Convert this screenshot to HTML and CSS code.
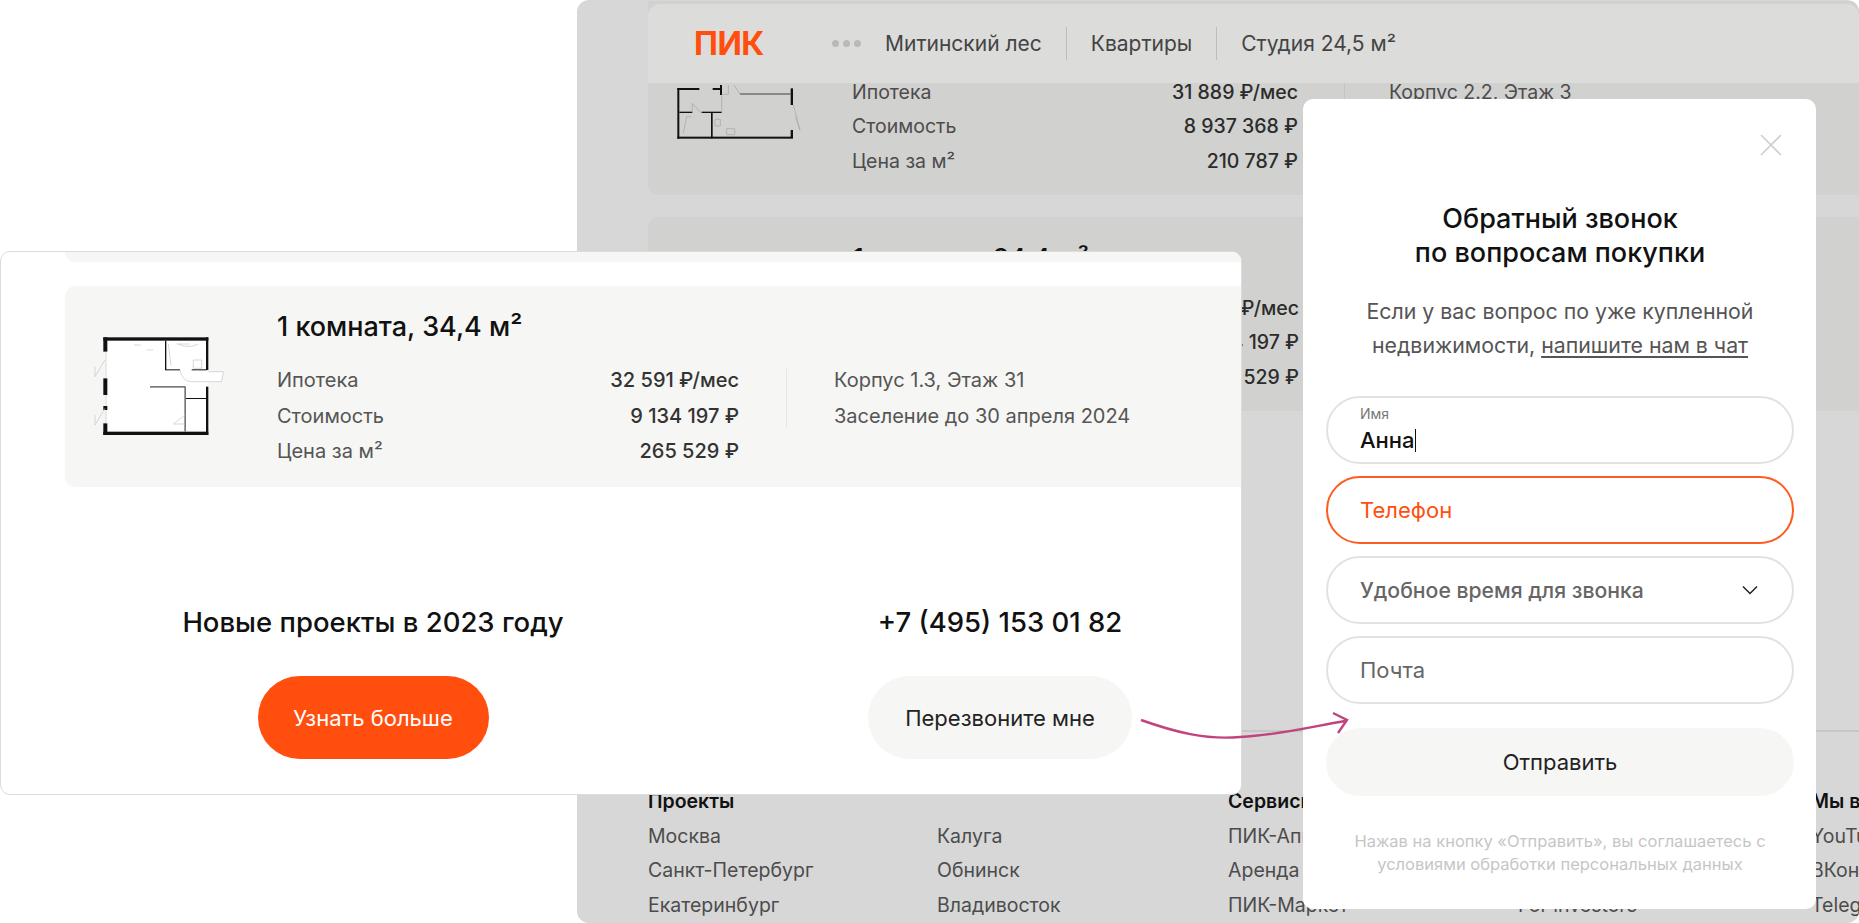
FILE: index.html
```html
<!DOCTYPE html>
<html lang="ru">
<head>
<meta charset="utf-8">
<title>ПИК</title>
<link rel="stylesheet" href="styles.css">
</head>
<body>
<div class="stage">

  <!-- page behind, dimmed -->
  <div class="win-back">
    <div class="site-head">
      <span class="logo">ПИК</span>
      <span class="dots"><i></i><i></i><i></i></span>
      <span class="crumb">Митинский лес</span>
      <span class="crumb-sep"></span>
      <span class="crumb">Квартиры</span>
      <span class="crumb-sep"></span>
      <span class="crumb">Студия 24,5 м²</span>
    </div>

    <div class="flat flat-dim flat-first">
      <svg class="plan-dim" viewBox="0 0 480 270">
        <g fill="#111">
          <rect x="52" y="54" width="66" height="6"/>
          <rect x="52" y="54" width="6" height="152"/>
          <rect x="52" y="200" width="347" height="6"/>
          <rect x="158" y="54" width="27" height="6"/>
          <rect x="180" y="45" width="6" height="30"/>
          <rect x="392" y="55" width="7" height="50"/>
          <rect x="392" y="180" width="7" height="24"/>
          <rect x="153" y="127" width="5" height="78"/>
          <rect x="58" y="125" width="39" height="4"/>
          <rect x="125" y="125" width="60" height="4"/>
        </g>
        <rect x="240" y="70" width="152" height="4" fill="#666"/>
        <path d="M185 75v50M205 45v28h-20M222 45l18 28M97 125v-25l25 28M400 105l20 75-14-40M70 190l10-50h14M165 148h16v20h-16zM200 176h24v18h-24z" fill="none" stroke="#a5a5a5" stroke-width="2"/>
      </svg>
      <div class="flat-info">
        <div class="flat-title"></div>
        <div class="flat-cols">
          <div class="specs">
            <div class="spec"><span>Ипотека</span><b>31 889 ₽/мес</b></div>
            <div class="spec"><span>Стоимость</span><b>8 937 368 ₽</b></div>
            <div class="spec"><span>Цена за м²</span><b>210 787 ₽</b></div>
          </div>
          <div class="flat-rule"></div>
          <div class="meta">
            <div>Корпус 2.2, Этаж 3</div>
          </div>
        </div>
      </div>
    </div>

    <div class="flat flat-dim">
      <div class="flat-info flat-info-solo">
        <div class="flat-title">1 комната, 34,4 м²</div>
        <div class="flat-cols">
          <div class="specs">
            <div class="spec"><b>32 591 ₽/мес</b></div>
            <div class="spec"><b>9 134 197 ₽</b></div>
            <div class="spec"><b>265 529 ₽</b></div>
          </div>
        </div>
      </div>
    </div>

    <div class="foot-rule"></div>

    <div class="foot">
      <div class="foot-col">
        <div class="foot-head">Проекты</div>
        <div>Москва</div>
        <div>Санкт-Петербург</div>
        <div>Екатеринбург</div>
      </div>
      <div class="foot-col">
        <div>Калуга</div>
        <div>Обнинск</div>
        <div>Владивосток</div>
      </div>
      <div class="foot-col">
        <div class="foot-head">Сервисы</div>
        <div>ПИК-Аппарт</div>
        <div>Аренда</div>
        <div>ПИК-Маркет</div>
      </div>
      <div class="foot-col">
        <div>For investors</div>
      </div>
      <div class="foot-col">
        <div class="foot-head">Мы в сети</div>
        <div>YouTube</div>
        <div>ВКонтакте</div>
        <div>Telegram</div>
      </div>
    </div>
  </div>

  <!-- enlarged fragment -->
  <div class="win-front">
    <div class="prev-card"></div>
    <div class="flat">
      <svg class="plan" viewBox="0 0 480 390">
        <rect x="76" y="58" width="306" height="282" fill="#fff"/>
        <path d="M385 155h45l-5 30h-95l-25-35h80z" fill="#fff"/>
        <g fill="#111">
          <rect x="70" y="52" width="315" height="10"/>
          <rect x="70" y="335" width="315" height="10"/>
          <rect x="70" y="52" width="12" height="43"/>
          <rect x="70" y="175" width="12" height="50"/>
          <rect x="70" y="258" width="12" height="12"/>
          <rect x="70" y="310" width="12" height="35"/>
          <rect x="378" y="52" width="7" height="98"/>
          <rect x="378" y="200" width="7" height="145"/>
          <rect x="255" y="62" width="4" height="88"/>
          <rect x="255" y="148" width="45" height="3"/>
          <rect x="335" y="148" width="45" height="3"/>
          <rect x="318" y="234" width="62" height="3"/>
        </g>
        <g fill="#777">
          <rect x="210" y="198" width="106" height="5"/>
          <rect x="313" y="200" width="5" height="135"/>
        </g>
        <path d="M78 95v80M78 225v33M78 270v40M45 170l30-50M45 315l30-50M45 170v-30M45 315v-30M330 185h95l5-30h-45M300 150q5 30 30 35M280 312l35-27M280 312h35M265 72l8 65M162 75h20M200 90h20M290 72h40M340 120h25v25h-25zM295 72q30 15 60 0" fill="none" stroke="#c4c4c4" stroke-width="2"/>
      </svg>
      <div class="flat-info">
        <div class="flat-title">1 комната, 34,4 м²</div>
        <div class="flat-cols">
          <div class="specs">
            <div class="spec"><span>Ипотека</span><b>32 591 ₽/мес</b></div>
            <div class="spec"><span>Стоимость</span><b>9 134 197 ₽</b></div>
            <div class="spec"><span>Цена за м²</span><b>265 529 ₽</b></div>
          </div>
          <div class="flat-rule"></div>
          <div class="meta">
            <div>Корпус 1.3, Этаж 31</div>
            <div>Заселение до 30 апреля 2024</div>
          </div>
        </div>
      </div>
    </div>

    <div class="cta-row">
      <div class="cta">
        <div class="cta-title">Новые проекты в 2023 году</div>
        <div class="btn btn-orange">Узнать больше</div>
      </div>
      <div class="cta">
        <div class="cta-title">+7 (495) 153 01 82</div>
        <div class="btn btn-grey">Перезвоните мне</div>
      </div>
    </div>
  </div>

  <!-- callback modal -->
  <div class="modal">
    <svg class="close" viewBox="0 0 22 22"><path d="M1 1l20 20M21 1L1 21" fill="none" stroke="#cfcfcf" stroke-width="1.6"/></svg>
    <h2 class="modal-title">Обратный звонок<br>по вопросам покупки</h2>
    <p class="modal-text">Если у вас вопрос по уже купленной<br>недвижимости, <a href="#">напишите нам в чат</a></p>
    <div class="fields">
      <div class="field field-filled">
        <span class="field-label">Имя</span>
        <span class="field-value">Анна<i class="caret"></i></span>
      </div>
      <div class="field field-error">Телефон</div>
      <div class="field field-select">
        Удобное время для звонка
        <svg class="chev" viewBox="0 0 16 10"><path d="M1 1.5l7 7 7-7" fill="none" stroke="#222" stroke-width="1.5"/></svg>
      </div>
      <div class="field">Почта</div>
    </div>
    <div class="btn btn-grey btn-send">Отправить</div>
    <p class="modal-note">Нажав на кнопку «Отправить», вы соглашаетесь с<br>условиями обработки персональных данных</p>
  </div>

  <svg class="arrow" viewBox="0 0 1859 923">
    <path d="M1141 720C1175 732 1205 740 1240 737C1280 735 1310 727 1345 721M1333 713L1347 720L1338 733" fill="none" stroke="#c0447f" stroke-width="2.4"/>
  </svg>
</div>
</body>
</html>
```

FILE: styles.css
```css
* {
    box-sizing: border-box;
}
body {
    margin: 0;
    background: #fff;
    font-family: Inter, "Noto Sans", sans-serif;
    color: #222;
}
.stage {
    position: relative;
    width: 1859px;
    height: 923px;
    overflow: hidden;
    background: #fff;
}

/* back page */
.win-back {
    position: absolute;
    left: 577px;
    top: 0;
    width: 1282px;
    height: 923px;
    overflow: hidden;
    padding-left: 71px;
    padding-top: 1px;
    background: #d7d7d7;
    border-radius: 12px;
    color: #4c4c4c;
}
.site-head {
    position: absolute;
    left: 71px;
    top: 4px;
    right: 0;
    height: 79px;
    display: flex;
    align-items: center;
    padding-left: 46px;
    background: #dcdcdb;
    border-radius: 12px 12px 0 0;
    z-index: 1;
}
.logo {
    width: 138px;
    font-size: 32px;
    font-weight: 700;
    color: #ff4e0e;
    letter-spacing: -0.5px;
}
.dots {
    display: flex;
    gap: 4px;
    margin-right: 24px;
}
.dots i {
    width: 7px;
    height: 7px;
    border-radius: 50%;
    background: #b9b9b9;
}
.crumb {
    font-size: 21px;
    color: #444;
}
.crumb-sep {
    width: 1px;
    height: 33px;
    margin: 0 24px;
    background: #bdbdbd;
}

/* flat card */
.flat {
    display: flex;
    height: 201px;
    margin-left: 64px;
    padding-top: 25px;
    background: #f6f6f4;
    border-radius: 10px 0 0 10px;
}
.plan {
    flex: none;
    width: 160px;
    height: 130px;
    margin: 9px 0 0 15px;
}
.flat-info {
    margin-left: 37px;
}
.flat-title {
    height: 32px;
    font-size: 27px;
    font-weight: 500;
    line-height: 32px;
    color: #111;
    white-space: nowrap;
}
.flat-cols {
    display: flex;
    margin-top: 20px;
}
.specs {
    width: 462px;
    font-size: 20px;
    color: #555;
    white-space: nowrap;
}
.spec {
    display: flex;
    justify-content: space-between;
    height: 35.5px;
    line-height: 35.5px;
}
.spec b {
    margin-left: auto;
    font-weight: 500;
    color: #333;
}
.flat-rule {
    width: 1px;
    height: 59px;
    margin: 6px 47px 0 47px;
    background: #e6e6e4;
}
.meta {
    font-size: 20px;
    line-height: 35.5px;
    color: #555;
    white-space: nowrap;
}

.flat-dim {
    height: 194px;
    margin-left: 0;
    margin-bottom: 22px;
    background: #d1d1cf;
    color: #4c4c4c;
}
.flat-first {
    border-radius: 0 0 0 10px;
}
.flat-dim .flat-info {
    margin-left: 32px;
}
.flat-dim .flat-info-solo {
    margin-left: 205px;
}
.flat-dim .flat-title {
    font-size: 26px;
}
.flat-dim .flat-cols {
    margin-top: 16.5px;
}
.flat-dim .specs {
    width: 446px;
    font-size: 19.5px;
    color: #4c4c4c;
}
.flat-dim .spec {
    height: 34.5px;
    line-height: 34.5px;
}
.flat-dim .spec b {
    color: #2c2c2c;
}
.flat-dim .flat-rule {
    margin-right: 44px;
    margin-left: 46px;
    background: #c4c4c2;
}
.flat-dim .meta {
    font-size: 19.5px;
    line-height: 34.5px;
    color: #4c4c4c;
}
.plan-dim {
    flex: none;
    width: 160px;
    height: 90px;
    margin: 44px 0 0 12px;
}

.foot-rule {
    height: 2px;
    margin-top: 319px;
    background: #c6c6c6;
}
.foot {
    display: grid;
    grid-template-columns: 289px 291px 290px 293px 120px;
    margin-top: 52px;
    font-size: 19.5px;
    line-height: 34.5px;
    color: #4c4c4c;
    white-space: nowrap;
}
.foot-col {
    display: flex;
    flex-direction: column;
    justify-content: flex-end;
}
.foot-head {
    font-weight: 600;
    color: #111;
}

/* front fragment */
.win-front {
    position: absolute;
    left: 0;
    top: 251px;
    width: 1242px;
    height: 544px;
    overflow: hidden;
    background: #fff;
    border: 1px solid #dcdcdc;
    border-radius: 10px;
}
.prev-card {
    height: 10px;
    margin-left: 64px;
    margin-bottom: 24px;
    background: #f6f6f4;
    border-radius: 0 0 0 10px;
}
.cta-row {
    display: grid;
    grid-template-columns: 744px 264px;
    column-gap: 123px;
    margin-top: 118px;
}
.cta {
    display: flex;
    flex-direction: column;
    align-items: center;
    gap: 37px;
}
.cta-title {
    height: 34px;
    font-size: 27.5px;
    font-weight: 500;
    line-height: 34px;
    color: #111;
    white-space: nowrap;
}
.btn {
    display: flex;
    align-items: center;
    justify-content: center;
    height: 83px;
    border-radius: 42px;
    font-size: 22px;
}
.btn-orange {
    width: 231px;
    background: #ff4e0e;
    color: #fff;
}
.btn-grey {
    width: 264px;
    background: #f6f6f4;
    color: #222;
}

/* modal */
.modal {
    position: absolute;
    left: 1303px;
    top: 99px;
    width: 513px;
    height: 810px;
    padding: 103px 22px 0 23px;
    background: #fff;
    border-radius: 10px;
    text-align: center;
}
.close {
    position: absolute;
    right: 34px;
    top: 35px;
    width: 22px;
    height: 22px;
}
.modal-title {
    margin: 0;
    font-size: 27px;
    font-weight: 500;
    line-height: 34px;
    color: #111;
}
.modal-text {
    margin: 24px 0 34px;
    font-size: 21.3px;
    line-height: 34px;
    color: #555;
}
.modal-text a {
    color: #555;
    text-underline-offset: 3px;
}
.fields {
    display: flex;
    flex-direction: column;
    gap: 12px;
}
.field {
    position: relative;
    display: flex;
    align-items: center;
    height: 68px;
    padding-left: 32px;
    border: 2px solid #e2e2e2;
    border-radius: 34px;
    font-size: 22px;
    color: #666;
}
.field-filled {
    flex-direction: column;
    align-items: flex-start;
    justify-content: flex-start;
    padding-top: 8px;
}
.field-label {
    font-size: 14px;
    line-height: 16px;
    color: #777;
}
.field-value {
    display: flex;
    align-items: center;
    margin-top: 6px;
    line-height: 24px;
    color: #111;
    font-weight: 500;
}
.caret {
    width: 1px;
    height: 23px;
    background: #111;
}
.field-error {
    border-color: #ff5a20;
    color: #ff4e0e;
}
.field-select {
    justify-content: space-between;
    padding-right: 34px;
    font-size: 21.2px;
    font-weight: 500;
}
.chev {
    width: 16px;
    height: 10px;
}
.btn-send {
    width: 100%;
    height: 68px;
    margin-top: 24px;
    border-radius: 34px;
}
.modal-note {
    margin: 34px 0 0;
    font-size: 16.5px;
    line-height: 23px;
    color: #c6c6c6;
    white-space: nowrap;
}

.arrow {
    position: absolute;
    left: 0;
    top: 0;
    width: 1859px;
    height: 923px;
    pointer-events: none;
}
```
